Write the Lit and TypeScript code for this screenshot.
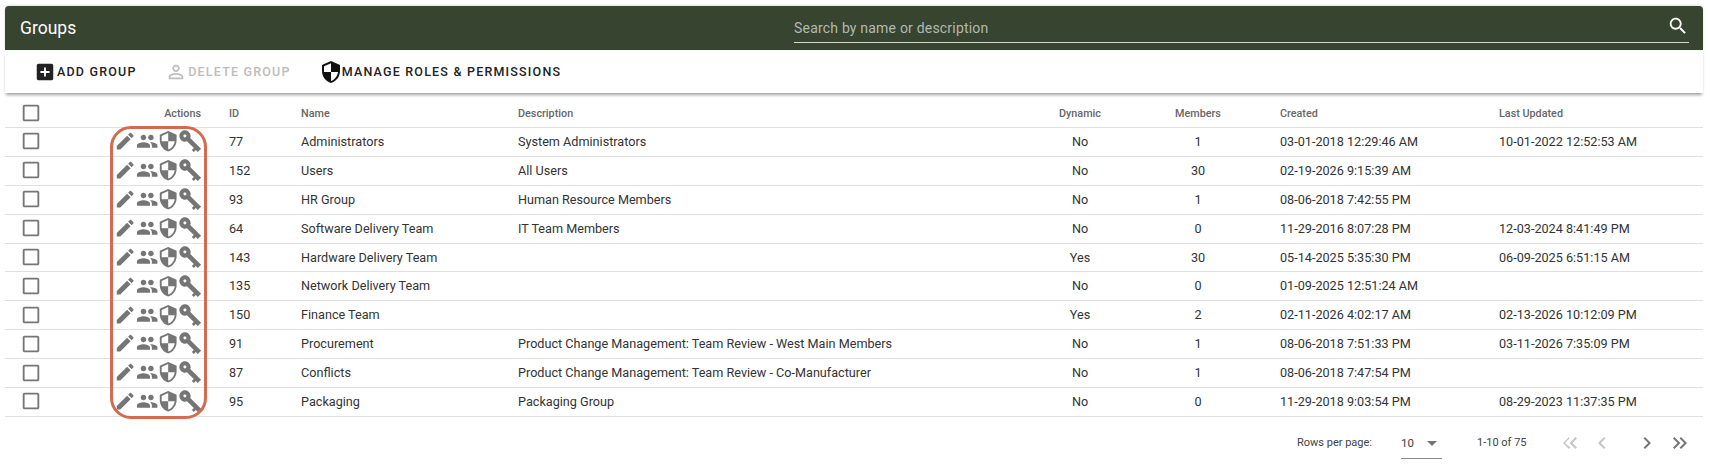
import { LitElement, html, css, svg } from "lit";
import { customElement } from "lit/decorators.js";

const P = {
  edit: "M3 17.25V21h3.75L17.81 9.94l-3.75-3.75L3 17.25zM20.71 7.04c.39-.39.39-1.02 0-1.41l-2.34-2.34c-.39-.39-1.02-.39-1.41 0l-1.83 1.83 3.75 3.75 1.83-1.83z",
  people: "M16 11c1.66 0 2.99-1.34 2.99-3S17.66 5 16 5c-1.66 0-3 1.34-3 3s1.34 3 3 3zm-8 0c1.66 0 2.99-1.34 2.99-3S9.66 5 8 5C6.34 5 5 6.34 5 8s1.34 3 3 3zm0 2c-2.33 0-7 1.17-7 3.5V19h14v-2.5c0-2.33-4.67-3.5-7-3.5zm8 0c-.29 0-.62.02-.97.05 1.16.84 1.97 1.97 1.97 3.45V19h6v-2.5c0-2.33-4.67-3.5-7-3.5z",
  shield: "M12 1L3 5v6c0 5.55 3.84 10.74 9 12 5.16-1.26 9-6.45 9-12V5l-9-4zm0 10.99h7c-.53 4.12-3.28 7.79-7 8.94V12H5V6.3l7-3.11v8.8z",
  key: "M9.6 9.5C8.8 7.4 6.6 6 4 6c-3.3 0-6 2.7-6 6s2.7 6 6 6c2.6 0 4.8-1.4 5.6-3.5H20v3h3v-3h3v-5zM4 13.6c-.9 0-1.6-.7-1.6-1.6s.7-1.6 1.6-1.6 1.6.7 1.6 1.6-.7 1.6-1.6 1.6z",
  add: "M19 3H5c-1.11 0-2 .9-2 2v14c0 1.1.89 2 2 2h14c1.1 0 2-.9 2-2V5c0-1.1-.9-2-2-2zm-2 10h-4v4h-2v-4H7v-2h4V7h2v4h4v2z",
  person: "M12 5.9c1.16 0 2.1.94 2.1 2.1s-.94 2.1-2.1 2.1S9.9 9.16 9.9 8s.94-2.1 2.1-2.1m0 9c2.97 0 6.1 1.46 6.1 2.1v1.1H5.9V17c0-.64 3.13-2.1 6.1-2.1M12 4C9.79 4 8 5.79 8 8s1.79 4 4 4 4-1.79 4-4-1.79-4-4-4zm0 9c-2.67 0-8 1.34-8 4v3h16v-3c0-2.66-5.33-4-8-4z",
  box: "M19 5v14H5V5h14m0-2H5c-1.1 0-2 .9-2 2v14c0 1.1.9 2 2 2h14c1.1 0 2-.9 2-2V5c0-1.1-.9-2-2-2z",
  first: "M17.59 18L19 16.59 14.42 12 19 7.41 17.59 6l-6 6zM11 18l1.41-1.41L6.83 12l4.58-4.59L11 6l-6 6z",
  last: "M6.41 6L5 7.41 9.58 12 5 16.59 6.41 18l6-6zM13 6l-1.41 1.41L16.17 12l-4.58 4.59L13 18l6-6z",
  left: "M15.41 7.41L14 6l-6 6 6 6 1.41-1.41L10.83 12z",
  right: "M10 6L8.59 7.41 13.17 12l-4.58 4.59L10 18l6-6z",
  search: "M15.5 14h-.79l-.28-.27C15.41 12.59 16 11.11 16 9.5 16 5.91 13.09 3 9.5 3S3 5.91 3 9.5 5.91 16 9.5 16c1.61 0 3.09-.59 4.23-1.57l.27.28v.79l5 4.99L20.49 19l-4.99-5zm-6 0C7.01 14 5 11.99 5 9.5S7.01 5 9.5 5 14 7.01 14 9.5 11.99 14 9.5 14z",
  drop: "M7 10l5 5 5-5z",
};

const icon = (d: string, cls = "") => html`<svg class=${"ic " + cls} viewBox="0 0 24 24">${svg`<path d=${d}></path>`}</svg>`;

const rows: string[][] = [
  ["77", "Administrators", "System Administrators", "No", "1", "03-01-2018 12:29:46 AM", "10-01-2022 12:52:53 AM"],
  ["152", "Users", "All Users", "No", "30", "02-19-2026 9:15:39 AM", ""],
  ["93", "HR Group", "Human Resource Members", "No", "1", "08-06-2018 7:42:55 PM", ""],
  ["64", "Software Delivery Team", "IT Team Members", "No", "0", "11-29-2016 8:07:28 PM", "12-03-2024 8:41:49 PM"],
  ["143", "Hardware Delivery Team", "", "Yes", "30", "05-14-2025 5:35:30 PM", "06-09-2025 6:51:15 AM"],
  ["135", "Network Delivery Team", "", "No", "0", "01-09-2025 12:51:24 AM", ""],
  ["150", "Finance Team", "", "Yes", "2", "02-11-2026 4:02:17 AM", "02-13-2026 10:12:09 PM"],
  ["91", "Procurement", "Product Change Management: Team Review - West Main Members", "No", "1", "08-06-2018 7:51:33 PM", "03-11-2026 7:35:09 PM"],
  ["87", "Conflicts", "Product Change Management: Team Review - Co-Manufacturer", "No", "1", "08-06-2018 7:47:54 PM", ""],
  ["95", "Packaging", "Packaging Group", "No", "0", "11-29-2018 9:03:54 PM", "08-29-2023 11:37:35 PM"],
];

@customElement("app-root")
export class AppRoot extends LitElement {
  static styles = css`
    :host {
      display: block;
      position: relative;
      height: 471px;
      padding: 6px 7px 0 5px;
      box-sizing: border-box;
      background: #fff;
      font-family: Roboto, sans-serif;
      color: #333;
      overflow: hidden;
    }
    .ic { display: block; fill: currentColor; flex: none; }
    .bar {
      height: 44px;
      background: #364430;
      color: #fff;
      border-radius: 4px 4px 0 0;
      display: flex;
      align-items: flex-start;
      padding: 0 14px 0 15px;
      box-shadow: 0 -1px 3px rgba(0,0,0,.12);
    }
    .title { font-size: 17.5px; width: 774px; flex: none; line-height: 44px; }
    .search {
      flex: 1;
      height: 37px;
      box-sizing: border-box;
      border-bottom: 1px solid #d5d9d3;
      display: flex;
      align-items: center;
      justify-content: space-between;
      color: #b4b9b1;
      font-size: 14px;
      letter-spacing: .2px;
    }
    .search span { margin-top: 8px; }
    .search .ic { width: 22px; height: 22px; color: #fff; margin-top: 4px; margin-right: 0; }
    .toolbar {
      height: 43px;
      display: flex;
      align-items: center;
      padding-left: 29px;
      gap: 28.5px;
      box-shadow: 0 3px 3px -1px rgba(0,0,0,.38);
      position: relative;
    }
    .btn {
      display: flex;
      align-items: center;
      gap: 1px;
      font-size: 12.5px;
      font-weight: 500;
      letter-spacing: 1.2px;
      color: #222;
      text-transform: uppercase;
    }
    .btn .ic { width: 22px; height: 22px; }
    .btn .m { width: 24px; height: 24px; margin-right: -2.5px; color: #111; }
    .btn.off { color: #bdbdbd; }
    .table { font-size: 12.65px; margin-top: 6px; }
    .row {
      display: grid;
      grid-template-columns: 95px 101px 100px 217px 502px 120px 116px 243px 204px;
      height: 28.9px;
      align-items: center;
      border-bottom: 1px solid #e0e0e0;
      box-sizing: border-box;
      padding-bottom: 1px;
    }
    .head {
      height: 29px;
      padding-bottom: 0;
      font-size: 10.8px;
      font-weight: 500;
      color: #666;
    }
    .id { padding-left: 28px; }
    .created { padding-left: 24px; }
    .chk { color: #757575; padding-left: 15px; }
    .chk .ic { width: 22px; height: 22px; }
    .actions { display: flex; justify-content: flex-end; gap: 0; color: #757575; }
    .actions .ic { width: 22.4px; height: 22.4px; margin: 0 -.4px; overflow: visible; }
    .actions .k { transform: rotate(45deg); }
    .right { text-align: right; }
    .center { text-align: center; }
    .pager {
      height: 52px;
      display: flex;
      align-items: center;
      font-size: 11px;
      color: #424242;
    }
    .rpp { margin-left: 1292px; width: 104px; }
    .sel {
      width: 41px;
      height: 30px;
      box-sizing: border-box;
      border-bottom: 1px solid #8a8a8a;
      display: flex;
      align-items: center;
      justify-content: space-between;
      font-size: 11.5px;
      align-self: flex-start;
      margin-top: 12px;
    }
    .sel .ic { width: 24px; height: 24px; color: #757575; margin-right: -2px; }
    .range { margin-left: 35px; width: 70px; }
    .nav { display: flex; margin-left: 11px; color: #757575; }
    .nav .ic { width: 24px; height: 24px; }
    .nav .dis { color: #c4c4c4; }
    .nav .a { margin-right: 8px; }
    .nav .b { margin-right: 21px; }
    .nav .c { margin-right: 9px; }
    .ring {
      position: absolute;
      left: 110px;
      top: 126px;
      width: 97px;
      height: 293px;
      box-sizing: border-box;
      border: 3px solid #d26b50;
      border-radius: 21px;
      pointer-events: none;
    }
  `;

  render() {
    return html`
      <div class="bar">
        <div class="title">Groups</div>
        <div class="search"><span>Search by name or description</span>${icon(P.search)}</div>
      </div>
      <div class="toolbar">
        <div class="btn">${icon(P.add)}Add Group</div>
        <div class="btn off">${icon(P.person)}Delete Group</div>
        <div class="btn">${icon(P.shield, "m")}Manage Roles &amp; Permissions</div>
      </div>
      <div class="table">
        <div class="row head">
          <div class="chk">${icon(P.box)}</div>
          <div class="right">Actions</div>
          <div class="id">ID</div>
          <div>Name</div>
          <div>Description</div>
          <div class="center">Dynamic</div>
          <div class="center">Members</div>
          <div class="created">Created</div>
          <div>Last Updated</div>
        </div>
        ${rows.map(r => html`
          <div class="row">
            <div class="chk">${icon(P.box)}</div>
            <div class="actions">${icon(P.edit)}${icon(P.people)}${icon(P.shield)}${icon(P.key, "k")}</div>
            <div class="id">${r[0]}</div>
            <div>${r[1]}</div>
            <div>${r[2]}</div>
            <div class="center">${r[3]}</div>
            <div class="center">${r[4]}</div>
            <div class="created">${r[5]}</div>
            <div>${r[6]}</div>
          </div>`)}
      </div>
      <div class="pager">
        <div class="rpp">Rows per page:</div>
        <div class="sel"><span>10</span>${icon(P.drop)}</div>
        <div class="range">1-10 of 75</div>
        <div class="nav">
          ${icon(P.first, "dis a")}${icon(P.left, "dis b")}${icon(P.right, "c")}${icon(P.last)}
        </div>
      </div>
      <div class="ring"></div>
    `;
  }
}
